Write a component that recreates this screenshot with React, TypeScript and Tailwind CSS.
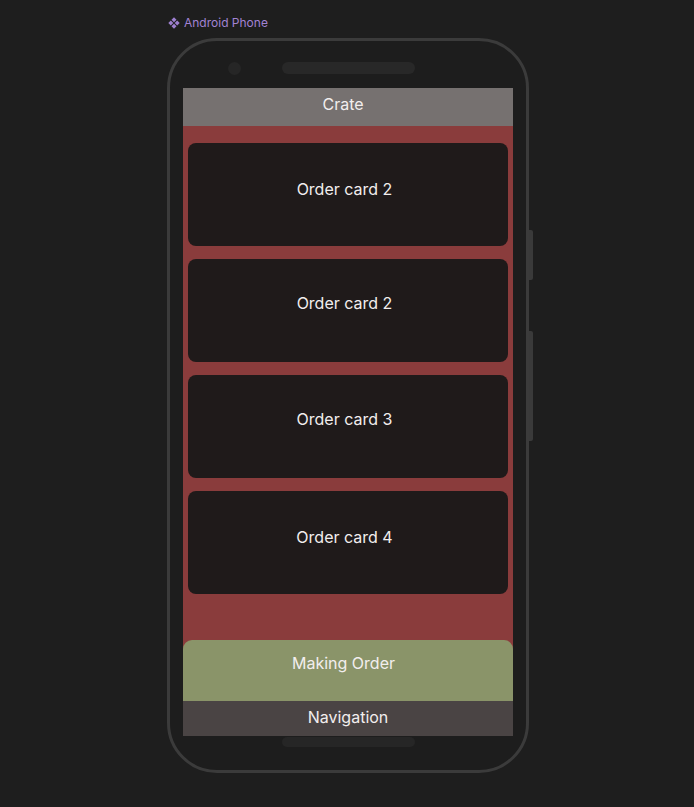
const cards = [
  { label: 'Order card 2', pad: 'pt-[36px]' },
  { label: 'Order card 2', pad: 'pt-[34px]' },
  { label: 'Order card 3', pad: 'pt-[34px]' },
  { label: 'Order card 4', pad: 'pt-[36px]' },
];

function ComponentIcon() {
  return (
    <svg width="12" height="12" viewBox="0 0 12 12" fill="#9d7fcf">
      <path d="M6 0.3 L8.5 2.8 L6 5.3 L3.5 2.8 Z" />
      <path d="M6 6.7 L8.5 9.2 L6 11.7 L3.5 9.2 Z" />
      <path d="M2.8 3.5 L5.3 6 L2.8 8.5 L0.3 6 Z" />
      <path d="M9.2 3.5 L11.7 6 L9.2 8.5 L6.7 6 Z" />
    </svg>
  );
}

export default function App() {
  return (
    <div
      className="w-[694px] h-[807px] bg-[#1e1e1e] overflow-hidden"
      style={{ fontFamily: 'Inter, "Noto Sans", sans-serif' }}
    >
      {/* Frame label */}
      <div className="flex items-start gap-[4px] pl-[168px] pt-[15px] h-[38px]">
        <div className="mt-[2px]">
          <ComponentIcon />
        </div>
        <span className="text-[12px] leading-[16px] text-[#a283d4]">Android Phone</span>
      </div>

      {/* Phone */}
      <div className="relative ml-[167px] w-[362px] h-[735px] rounded-[50px] border-[3px] border-[#3b3b3b] bg-[#1d1d1d] flex flex-col">
        {/* side buttons */}
        <div className="absolute right-[-7px] top-[189px] w-[4px] h-[50px] rounded-r-[2px] bg-[#3a3a3a]" />
        <div className="absolute right-[-7px] top-[290px] w-[4px] h-[110px] rounded-r-[2px] bg-[#3a3a3a]" />

        {/* top: camera + speaker */}
        <div className="h-[47px] flex items-start pt-[21px] pl-[58px]">
          <div className="w-[13px] h-[13px] rounded-full bg-[#262626]" />
          <div className="ml-[41px] w-[133px] h-[12px] rounded-full bg-[#282828]" />
        </div>

        {/* screen */}
        <div className="mx-[13px] flex flex-col h-[648px] text-[#f2eeee]">
          <div className="h-[38px] bg-[#767170] flex justify-center pt-[6px] pr-[10px] text-[16px] leading-[20px]">
            Crate
          </div>

          <div className="flex-1 bg-[#8a3c3c] flex flex-col">
            <div className="flex flex-col gap-[13px] px-[5px] pt-[17px]">
              {cards.map((c, i) => (
                <div
                  key={i}
                  className={`h-[103px] rounded-[8px] bg-[#1f1a1a] flex justify-center pr-[7px] text-[16px] leading-[20px] ${c.pad}`}
                >
                  {c.label}
                </div>
              ))}
            </div>
            <div className="mt-auto h-[61px] rounded-t-[9px] bg-[#8a9469] flex justify-center pt-[13px] pr-[9px] text-[16px] leading-[20px]">
              Making Order
            </div>
          </div>

          <div className="h-[35px] bg-[#4a4444] flex justify-center pt-[6px] text-[16px] leading-[20px]">
            Navigation
          </div>
        </div>

        {/* home bar */}
        <div className="ml-[112px] mt-[1px] w-[133px] h-[10px] rounded-full bg-[#262626]" />
      </div>
    </div>
  );
}
